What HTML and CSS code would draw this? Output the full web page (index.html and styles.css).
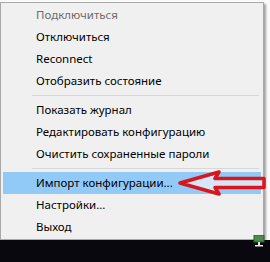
FILE: index.html
```html
<!DOCTYPE html>
<html lang="ru">
<head>
<meta charset="utf-8">
<link rel="stylesheet" href="styles.css">
</head>
<body>
<div class="screen">
  <div class="desktop">
    <div class="menu">
      <div class="item disabled">Подключиться</div>
      <div class="item">Отключиться</div>
      <div class="item">Reconnect</div>
      <div class="item">Отобразить состояние</div>
      <div class="sep"></div>
      <div class="item">Показать журнал</div>
      <div class="item">Редактировать конфигурацию</div>
      <div class="item">Очистить сохраненные пароли</div>
      <div class="sep"></div>
      <div class="item active">Импорт конфигурации...
        <svg class="arrow" width="90" height="26" viewBox="0 0 90 26">
          <polygon points="3,13 42,2 38,8.5 87,8.5 87,17.5 38,17.5 42,24" fill="#d6e6f6" stroke="#d8161e" stroke-width="3.5" stroke-linejoin="round"/>
        </svg>
      </div>
      <div class="item">Настройки...</div>
      <div class="item">Выход</div>
    </div>
  </div>
  <div class="taskbar">
    <svg class="net" width="12" height="12" viewBox="0 0 12 12">
      <rect x="1" y="0" width="10" height="7" fill="#4f8a4f" stroke="#2e5a2e" stroke-width="1"/>
      <rect x="5" y="7" width="2" height="3" fill="#e8e8e8"/>
      <rect x="2" y="10" width="8" height="1.5" fill="#e8e8e8"/>
    </svg>
  </div>
</div>
</body>
</html>
```
FILE: styles.css
```css
html, body {
  margin: 0;
  padding: 0;
}
body {
  width: 270px;
  height: 262px;
  overflow: hidden;
  background: #ffffff;
  font-family: "Noto Sans", "Segoe UI", sans-serif;
  font-size: 11.5px;
}
.screen {
  display: flex;
  flex-direction: column;
  height: 262px;
}
.desktop {
  height: 240px;
  background: #fafafa;
  padding-top: 2px;
  box-sizing: border-box;
}
.menu {
  width: 264px;
  height: 238px;
  box-sizing: border-box;
  background: #f0f0f0;
  border: 1px solid #a9a9a9;
  padding: 1px 2px;
  box-shadow: 2px 2px 2px rgba(0, 0, 0, 0.35);
  display: flex;
  flex-direction: column;
}
.item {
  position: relative;
  height: 22px;
  line-height: 22px;
  padding-left: 33px;
  color: #000;
  white-space: nowrap;
}
.item.disabled {
  color: #6d6d6d;
}
.item.active {
  background: #91c9f7;
}
.sep {
  height: 7px;
  display: flex;
  align-items: center;
  padding-left: 29px;
  padding-right: 2px;
}
.sep::before {
  content: "";
  flex: 1;
  height: 1px;
  background: #d7d7d7;
}
.arrow {
  position: absolute;
  left: 174px;
  top: -2px;
}
.taskbar {
  flex: 1;
  background: #08080e;
  display: flex;
  justify-content: flex-end;
  align-items: flex-start;
  padding-right: 5px;
}
.net {
  margin-top: -5px;
}
```
